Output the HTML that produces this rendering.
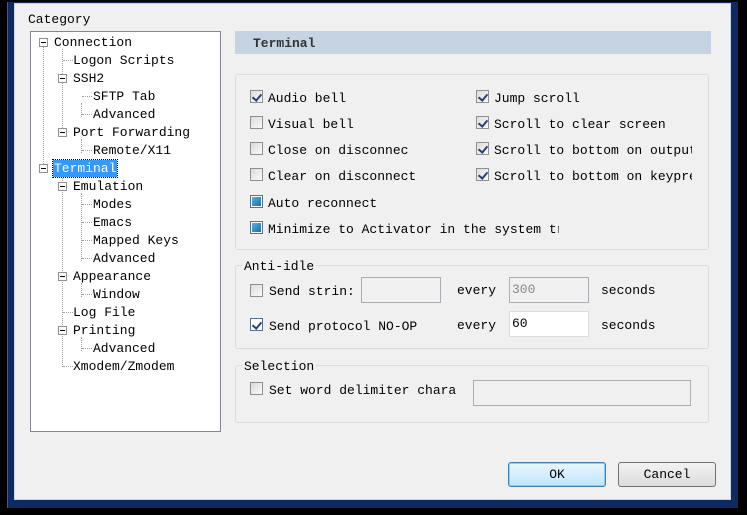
<!DOCTYPE html>
<html><head><style>
*{margin:0;padding:0;box-sizing:border-box}
body{width:747px;height:515px;background:#000;position:relative;overflow:hidden;font-family:"Liberation Mono","Noto Sans CJK SC",monospace;font-size:13px;color:#000}
.a{position:absolute;white-space:nowrap}
.frame{left:7px;top:2px;width:731px;height:506px;background:#0d2a63;border-left:1px solid #3a5a9a}
.dlg{left:14px;top:3px;width:717px;height:497px;background:#f0f0f0;border:1px solid #c8d4e6}
.tree{left:30px;top:31px;width:191px;height:401px;background:#fff;border:1px solid #828790}
.cb{position:absolute;width:13px;height:13px;border:1px solid #8e8f8f;background:linear-gradient(135deg,#dcdcdc,#fafafa)}
.cb.c::after{content:"";position:absolute;left:3px;top:1px;width:4px;height:7px;border:solid #2a3f7a;border-width:0 2px 2px 0;transform:rotate(40deg)}
.cb.s{background:#fff;border-color:#5a6d8a}
.cb.s::after{content:"";position:absolute;left:1px;top:1px;width:9px;height:9px;background:linear-gradient(135deg,#5ab0e0,#1a6ea8)}
.grp{position:absolute;border:1px solid #dcdcdc;border-radius:3px}
.inp{position:absolute;border:1px solid #abadb3;height:26px;padding:4px 2px;font-size:13px}
.btn{position:absolute;height:25px;border:1px solid #707070;border-radius:3px;background:linear-gradient(#f2f2f2,#dcdcdc);text-align:center;line-height:23px}
.tl{position:absolute;border-left:1px dotted #a0a0a0}
.th{position:absolute;border-top:1px dotted #a0a0a0}
.pm{position:absolute;width:9px;height:9px;border:1px solid #919191;background:#fff}
.pm::after{content:"";position:absolute;left:1px;top:3px;width:5px;height:1px;background:#000}
</style></head><body>
<div class="a frame"></div>
<div class="a dlg"></div>
<div class="a" style="left:28px;top:12px">Category</div>
<div class="a tree">
 <div class="tl" style="left:12px;top:15px;height:125px"></div>
 <div class="tl" style="left:31px;top:17px;height:85px"></div>
 <div class="tl" style="left:50px;top:71px;height:14px"></div>
 <div class="tl" style="left:50px;top:107px;height:14px"></div>
 <div class="tl" style="left:31px;top:143px;height:192px"></div>
 <div class="tl" style="left:50px;top:161px;height:68px"></div>
 <div class="tl" style="left:50px;top:251px;height:14px"></div>
 <div class="tl" style="left:50px;top:305px;height:14px"></div>
 <div class="th" style="left:32px;top:28px;width:10px"></div>
 <div class="th" style="left:51px;top:64px;width:10px"></div>
 <div class="th" style="left:51px;top:82px;width:10px"></div>
 <div class="th" style="left:51px;top:118px;width:10px"></div>
 <div class="th" style="left:51px;top:172px;width:10px"></div>
 <div class="th" style="left:51px;top:190px;width:10px"></div>
 <div class="th" style="left:51px;top:208px;width:10px"></div>
 <div class="th" style="left:51px;top:226px;width:10px"></div>
 <div class="th" style="left:51px;top:262px;width:10px"></div>
 <div class="th" style="left:32px;top:280px;width:10px"></div>
 <div class="th" style="left:51px;top:316px;width:10px"></div>
 <div class="th" style="left:32px;top:334px;width:10px"></div>
 <div class="pm" style="left:8px;top:6px"></div>
 <div class="pm" style="left:27px;top:42px"></div>
 <div class="pm" style="left:27px;top:96px"></div>
 <div class="pm" style="left:8px;top:132px"></div>
 <div class="pm" style="left:27px;top:150px"></div>
 <div class="pm" style="left:27px;top:240px"></div>
 <div class="pm" style="left:27px;top:294px"></div>
 <div class="a" style="left:23px;top:3px">Connection</div>
 <div class="a" style="left:42px;top:21px">Logon Scripts</div>
 <div class="a" style="left:42px;top:39px">SSH2</div>
 <div class="a" style="left:62px;top:57px">SFTP Tab</div>
 <div class="a" style="left:62px;top:75px">Advanced</div>
 <div class="a" style="left:42px;top:93px">Port Forwarding</div>
 <div class="a" style="left:62px;top:111px">Remote/X11</div>
 <div class="a" style="left:22px;top:128px;height:17px;line-height:17px;background:#3399ff;color:#fff;padding:0 1px;outline:1px dotted #000">Terminal</div>
 <div class="a" style="left:42px;top:147px">Emulation</div>
 <div class="a" style="left:62px;top:165px">Modes</div>
 <div class="a" style="left:62px;top:183px">Emacs</div>
 <div class="a" style="left:62px;top:201px">Mapped Keys</div>
 <div class="a" style="left:62px;top:219px">Advanced</div>
 <div class="a" style="left:42px;top:237px">Appearance</div>
 <div class="a" style="left:62px;top:255px">Window</div>
 <div class="a" style="left:42px;top:273px">Log File</div>
 <div class="a" style="left:42px;top:291px">Printing</div>
 <div class="a" style="left:62px;top:309px">Advanced</div>
 <div class="a" style="left:42px;top:327px">Xmodem/Zmodem</div>
</div>
<div class="a" style="left:235px;top:31px;width:476px;height:23px;background:#c5d3e2"></div>
<div class="a" style="left:253px;top:36px;font-weight:bold;color:#333">Terminal</div>
<div class="grp" style="left:235px;top:74px;width:474px;height:176px"></div>
<div class="cb c" style="left:250px;top:90px"></div><div class="a" style="left:268px;top:91px">Audio bell</div>
<div class="cb" style="left:250px;top:116px"></div><div class="a" style="left:268px;top:117px">Visual bell</div>
<div class="cb" style="left:250px;top:142px"></div><div class="a" style="left:268px;top:143px">Close on disconnec</div>
<div class="cb" style="left:250px;top:168px"></div><div class="a" style="left:268px;top:169px">Clear on disconnect</div>
<div class="cb s" style="left:250px;top:195px"></div><div class="a" style="left:268px;top:196px">Auto reconnect</div>
<div class="cb s" style="left:250px;top:221px"></div><div class="a" style="left:268px;top:222px;width:291px;overflow:hidden">Minimize to Activator in the system tray</div>
<div class="cb c" style="left:476px;top:90px"></div><div class="a" style="left:494px;top:91px">Jump scroll</div>
<div class="cb c" style="left:476px;top:116px"></div><div class="a" style="left:494px;top:117px">Scroll to clear screen</div>
<div class="cb c" style="left:476px;top:142px"></div><div class="a" style="left:494px;top:143px;width:198px;overflow:hidden">Scroll to bottom on output</div>
<div class="cb c" style="left:476px;top:168px"></div><div class="a" style="left:494px;top:169px;width:198px;overflow:hidden">Scroll to bottom on keypress</div>
<div class="grp" style="left:235px;top:265px;width:474px;height:84px"></div>
<div class="a" style="left:242px;top:259px;background:#f0f0f0;padding:0 2px">Anti-idle</div>
<div class="cb" style="left:250px;top:284px"></div><div class="a" style="left:269px;top:284px">Send strin:</div>
<div class="inp" style="left:361px;top:277px;width:80px;background:#f0f0f0"></div>
<div class="a" style="left:457px;top:283px">every</div>
<div class="inp" style="left:509px;top:277px;width:80px;background:#f0f0f0;color:#888">300</div>
<div class="a" style="left:601px;top:283px">seconds</div>
<div class="cb c" style="left:250px;top:318px;background:#fff;border-color:#5a6d8a"></div><div class="a" style="left:269px;top:319px">Send protocol NO-OP</div>
<div class="a" style="left:457px;top:318px">every</div>
<div class="inp" style="left:509px;top:311px;width:80px;background:#fff;border-color:#dcdcdc">60</div>
<div class="a" style="left:601px;top:318px">seconds</div>
<div class="grp" style="left:235px;top:365px;width:474px;height:58px"></div>
<div class="a" style="left:242px;top:359px;background:#f0f0f0;padding:0 2px">Selection</div>
<div class="cb" style="left:250px;top:382px"></div><div class="a" style="left:269px;top:383px">Set word delimiter chara</div>
<div class="inp" style="left:473px;top:380px;width:218px;background:#f0f0f0"></div>
<div class="btn" style="left:508px;top:462px;width:98px;border-color:#3c7fb1;background:linear-gradient(#eaf6fd,#bee6fd);box-shadow:inset 0 0 0 1px #8ed0f0">OK</div>
<div class="btn" style="left:618px;top:462px;width:98px">Cancel</div>
</body></html>
